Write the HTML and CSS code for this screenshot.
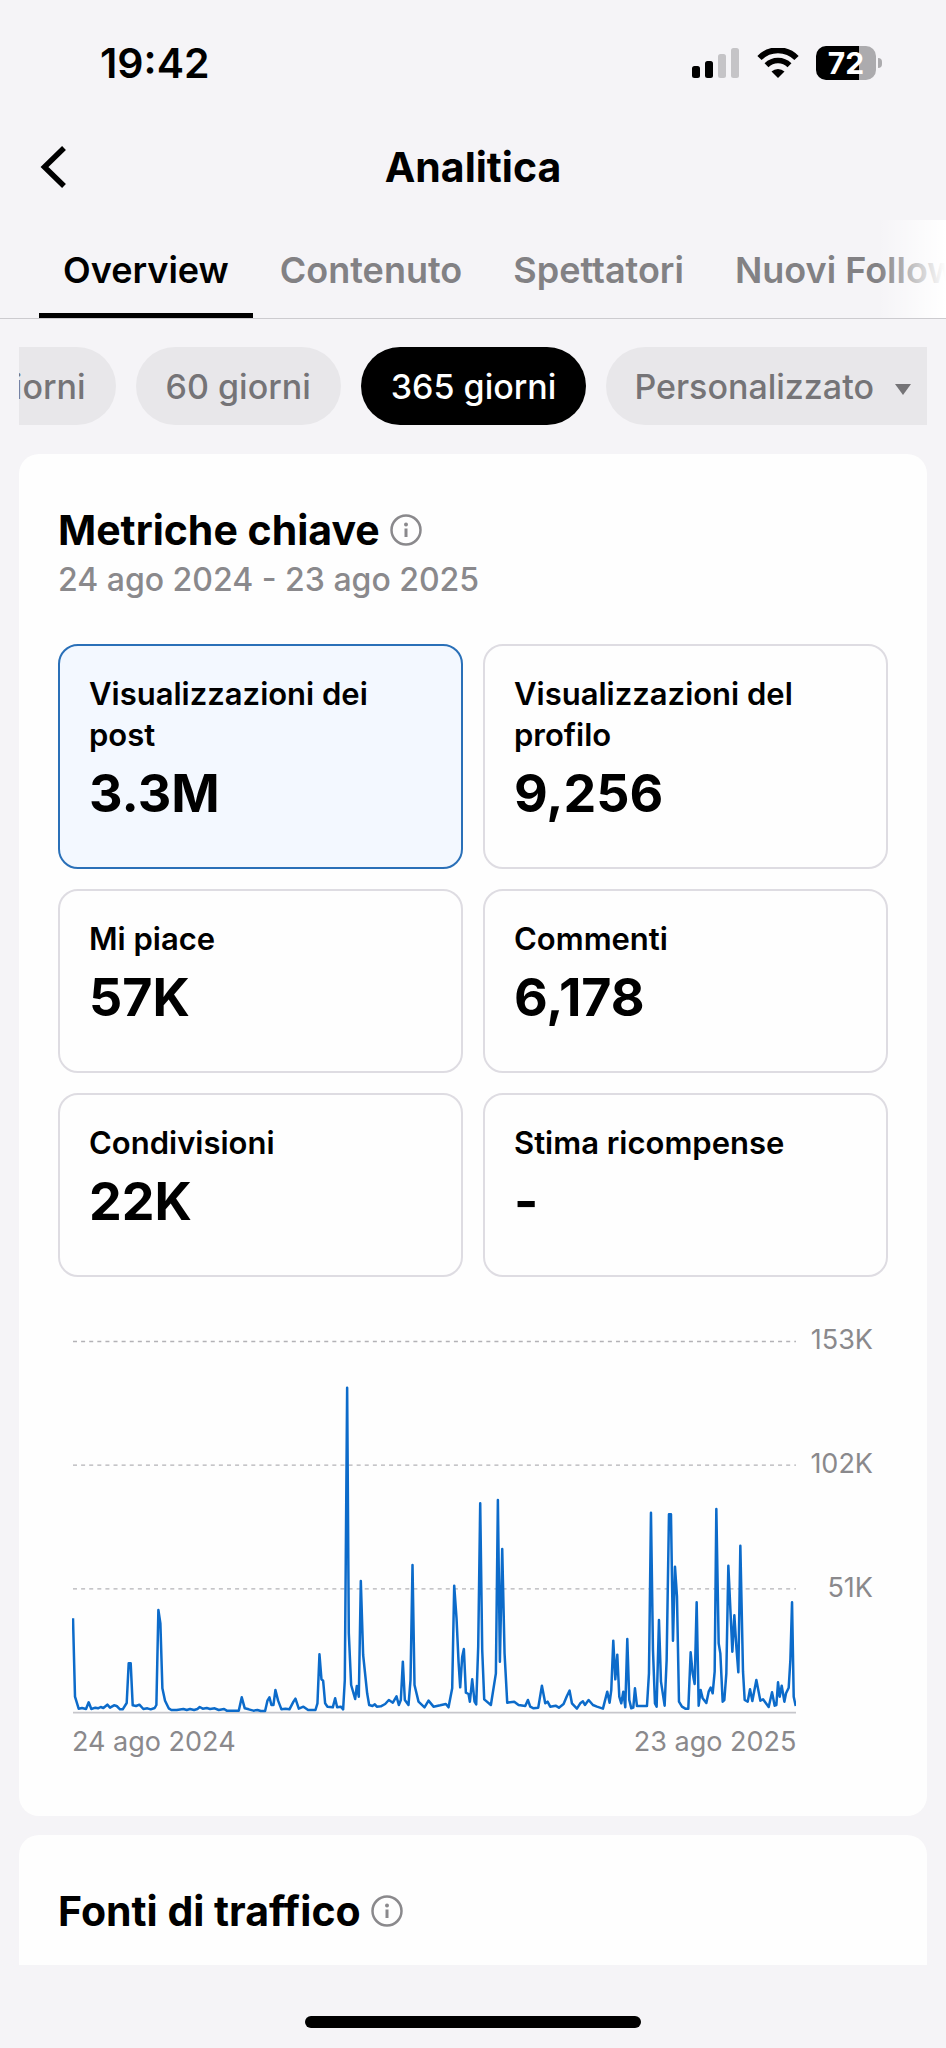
FILE: index.html
```html
<!DOCTYPE html>
<html lang="it">
<head>
  <meta charset="UTF-8">
  <meta name="viewport" content="width=device-width, initial-scale=1">
  <title>Analitica</title>
  <link rel="stylesheet" href="styles.css">
</head>
<body>

<div class="status-bar">
  <span class="time">19:42</span>
  <div class="status-icons">
    <svg width="48" height="30" viewBox="0 0 48 30">
      <rect x="0" y="18" width="8" height="12" rx="2.5"/>
      <rect x="13" y="13" width="8" height="17" rx="2.5"/>
      <rect x="26" y="6" width="8" height="24" rx="2.5" fill="#c5c4c7"/>
      <rect x="39" y="0" width="8" height="30" rx="2.5" fill="#c5c4c7"/>
    </svg>
    <svg width="42" height="30" viewBox="0 0 42 30">
      <path d="M2.5 10 A26 26 0 0 1 39.5 10" fill="none" stroke="#000" stroke-width="6"/>
      <path d="M9.5 17.3 A16.3 16.3 0 0 1 32.5 17.3" fill="none" stroke="#000" stroke-width="5.5"/>
      <path d="M21 30 L14.5 23.6 A9.2 9.2 0 0 1 27.5 23.6 Z"/>
    </svg>
    <div class="battery"><span>72</span></div>
  </div>
</div>

<header class="header">
  <button class="back" aria-label="Indietro">
    <svg width="26" height="44" viewBox="0 0 26 44">
      <path d="M24 3 L4.5 22 L24 41" fill="none" stroke="#000" stroke-width="5.5"/>
    </svg>
  </button>
  <h1>Analitica</h1>
</header>

<nav class="tabs">
  <a href="#" class="tab active">Overview</a>
  <a href="#" class="tab">Contenuto</a>
  <a href="#" class="tab">Spettatori</a>
  <a href="#" class="tab">Nuovi Follower</a>
</nav>

<div class="filters">
  <button class="pill">28 giorni</button>
  <button class="pill">60 giorni</button>
  <button class="pill selected">365 giorni</button>
  <button class="pill">Personalizzato
    <svg width="16" height="11" viewBox="0 0 16 11"><path d="M0 0 H16 L8 11 Z" fill="#757477"/></svg>
  </button>
</div>

<main class="content">
  <section class="card">
    <h2>Metriche chiave
      <svg class="info" width="32" height="32" viewBox="0 0 32 32">
        <circle cx="16" cy="16" r="14.5" fill="none" stroke="#8a898c" stroke-width="2.5"/>
        <circle cx="16" cy="10.5" r="2" fill="#8a898c"/>
        <path d="M16 14.5 V23" stroke="#8a898c" stroke-width="3"/>
      </svg>
    </h2>
    <p class="range">24 ago 2024 - 23 ago 2025</p>

    <div class="metrics">
      <button class="metric active"><span>Visualizzazioni dei post</span><b>3.3M</b></button>
      <button class="metric"><span>Visualizzazioni del profilo</span><b>9,256</b></button>
      <button class="metric"><span>Mi piace</span><b>57K</b></button>
      <button class="metric"><span>Commenti</span><b>6,178</b></button>
      <button class="metric"><span>Condivisioni</span><b>22K</b></button>
      <button class="metric"><span>Stima ricompense</span><b>-</b></button>
    </div>

    <div class="chart">
      <div class="plot">
        <svg viewBox="36 60 2172 1122" preserveAspectRatio="none">
          <!-- grid -->
          <g stroke="#b3b2b6" stroke-width="4" stroke-dasharray="12 12.3">
            <path d="M39 64.5 H2208"/>
            <path d="M39 435.5 H2208"/>
            <path d="M39 806.5 H2208"/>
          </g>
          <path d="M39 1178 H2208" stroke="#c6c6cb" stroke-width="5"/>
          <!-- daily views -->
          <polyline fill="none" stroke="#0c6bca" stroke-width="7.5" stroke-linejoin="round" points="
            39,895 45,1130 56,1166 66,1164 78,1167 86,1147 94,1167 106,1163 114,1165 122,1161 130,1164 142,1154 150,1163 162,1156 170,1158 180,1168 188,1168
            200,1149 206,1030 212,1030 218,1156 228,1158 238,1154 250,1167 262,1165 272,1168 284,1164 289,1155 295,870 301,910 307,1105 315,1142 326,1165
            334,1170 350,1170 370,1167 380,1170 390,1167 402,1170 412,1167 419,1161 428,1166 440,1164 450,1167 464,1165 476,1170 492,1167 500,1172 536,1172
            545,1132 554,1165 566,1168 580,1172 592,1170 602,1173 615,1173 622,1142 628,1132 634,1155 640,1155 646,1110 654,1142 664,1168 676,1166 688,1168
            700,1145 706,1136 716,1166 730,1160 744,1170 766,1170 772,1150 778,1003 784,1078 789,1082 795,1150 802,1160 818,1162 825,1135 831,1162 842,1160
            849,1168 854,1080 861,203 866,940 873,1095 885,1137 890,1098 896,1130 902,783 909,1005 921,1120 927,1155 937,1158 944,1153 950,1160 962,1159
            975,1152 986,1140 998,1148 1009,1129 1016,1155 1022,1140 1028,1025 1034,1140 1045,1155 1051,1080 1057,735 1063,1095 1075,1145 1093,1162
            1105,1142 1120,1160 1140,1156 1157,1152 1165,1162 1176,1105 1182,797 1189,895 1195,1025 1200,1102 1206,1010 1211,987 1217,1118 1225,1122
            1229,1145 1236,1078 1243,1145 1248,1153 1254,980 1260,550 1266,990 1272,1138 1292,1155 1307,1060 1313,540 1319,1025 1326,687 1333,1000
            1341,1148 1362,1145 1375,1155 1395,1158 1403,1140 1410,1160 1420,1165 1434,1163 1445,1097 1455,1150 1462,1145 1470,1160 1486,1157 1496,1163
            1510,1152 1520,1128 1528,1112 1535,1150 1550,1166 1560,1150 1568,1144 1574,1155 1585,1140 1598,1155 1610,1160 1628,1166 1641,1115 1648,1148
            1653,1110 1659,962 1665,1078 1671,1004 1677,1130 1683,1150 1689,1115 1695,1162 1701,957 1707,1140 1713,1165 1719,1163 1724,1105 1730,1158
            1760,1158 1766,1060 1772,578 1778,990 1784,1150 1789,1160 1796,900 1802,1085 1813,1157 1819,1020 1826,583 1832,583 1838,962 1844,740 1850,830
            1856,1145 1865,1160 1875,1166 1884,1166 1891,997 1897,1060 1903,1092 1909,847 1915,1157 1921,1110 1927,1135 1938,1149 1945,1115 1951,1103
            1957,1120 1963,1055 1968,567 1975,970 1980,1000 1987,1145 1992,1140 1998,1060 2004,737 2016,995 2022,886 2028,980 2034,1057 2040,677 2048,1055
            2053,1140 2062,1145 2069,1108 2076,1143 2088,1080 2100,1142 2108,1138 2125,1161 2135,1117 2143,1157 2148,1155 2153,1087 2158,1130 2164,1097
            2172,1145 2177,1120 2185,1103 2190,1020 2195,847 2200,1130 2206,1158"/>
        </svg>
        <div class="x-axis"><span>24 ago 2024</span><span>23 ago 2025</span></div>
      </div>
      <div class="y-axis"><span>153K</span><span>102K</span><span>51K</span></div>
    </div>
  </section>

  <section class="card">
    <h2>Fonti di traffico
      <svg class="info" width="32" height="32" viewBox="0 0 32 32">
        <circle cx="16" cy="16" r="14.5" fill="none" stroke="#8a898c" stroke-width="2.5"/>
        <circle cx="16" cy="10.5" r="2" fill="#8a898c"/>
        <path d="M16 14.5 V23" stroke="#8a898c" stroke-width="3"/>
      </svg>
    </h2>
  </section>
</main>

<footer class="home-bar"><div></div></footer>

</body>
</html>
```
FILE: styles.css
```css
* {
  box-sizing: border-box;
}

body {
  margin: 0;
  height: 100vh;
  display: flex;
  flex-direction: column;
  overflow: hidden;
  background: #f5f4f7;
  color: #000;
  font-family: Inter, "Liberation Sans", sans-serif;
}

h1, h2, p {
  margin: 0;
}

button {
  border: 0;
  padding: 0;
  background: none;
  color: inherit;
  font-family: inherit;
  cursor: pointer;
}

/* status bar */
.status-bar {
  flex: none;
  display: flex;
  align-items: center;
  justify-content: space-between;
  height: 116px;
  padding: 10px 64px 0 100px;
}

.time {
  font-size: 41px;
  font-weight: 600;
}

.status-icons {
  display: flex;
  align-items: center;
  gap: 17px;
}

.battery {
  position: relative;
  width: 60px;
  height: 34px;
  margin-right: 6px;
  border-radius: 10px;
  background: linear-gradient(to right, #000 72%, #acabae 72%);
  color: #fff;
  font-size: 30px;
  font-weight: 700;
  line-height: 34px;
  text-align: center;
}

.battery:after {
  content: "";
  position: absolute;
  right: -6px;
  top: 12px;
  width: 4px;
  height: 10px;
  border-radius: 0 4px 4px 0;
  background: #acabae;
}

/* title */
.header {
  flex: none;
  display: grid;
  grid-template-columns: 1fr auto 1fr;
  align-items: center;
  height: 104px;
  padding: 0 40px 2px;
}

.header h1 {
  font-size: 41px;
  font-weight: 700;
}

.back {
  justify-self: start;
  height: 44px;
}

.back svg {
  display: block;
}

/* tabs */
.tabs {
  flex: none;
  position: relative;
  display: flex;
  gap: 3px;
  height: 99px;
  padding-left: 39px;
  overflow: hidden;
  border-bottom: 1px solid #cccbcf;
}

.tabs:after {
  content: "";
  position: absolute;
  right: 0;
  top: 0;
  width: 68px;
  height: 100%;
  background: linear-gradient(to right, rgba(255, 255, 255, 0), #fff);
}

.tab {
  flex: none;
  padding: 0 24px;
  border-bottom: 5px solid transparent;
  color: #828184;
  font-size: 36px;
  font-weight: 600;
  line-height: 100px;
  text-decoration: none;
}

.tab.active {
  color: #000;
  border-color: #000;
}

/* date filters */
.filters {
  flex: none;
  display: flex;
  justify-content: flex-end;
  gap: 20px;
  margin: 28px 19px 29px;
  overflow: hidden;
}

.pill {
  flex: none;
  height: 78px;
  padding: 0 30px;
  border-radius: 39px;
  background: #e8e7ea;
  color: #757477;
  font-size: 34px;
  font-weight: 500;
}

.pill:last-child {
  padding: 0 16px 0 28px;
  border-radius: 39px 0 0 39px;
}

.pill svg {
  margin-left: 12px;
  vertical-align: 4px;
}

.pill.selected {
  background: #000;
  color: #fff;
}

/* cards */
.content {
  flex: 1;
  min-height: 0;
  padding: 0 19px;
  overflow: hidden;
}

.card {
  margin-bottom: 19px;
  padding: 50px 39px 56px;
  border-radius: 20px;
  background: #fefefe;
}

.card h2 {
  display: flex;
  align-items: center;
  gap: 10px;
  font-size: 41px;
  font-weight: 700;
  line-height: 52px;
}

.range {
  color: #8a898c;
  font-size: 32px;
  font-weight: 500;
  line-height: 48px;
}

.metrics {
  display: grid;
  grid-template-columns: 1fr 1fr;
  gap: 20px;
  margin-top: 40px;
}

.metric {
  display: flex;
  flex-direction: column;
  gap: 7px;
  padding: 27px 29px 41px;
  border: 2px solid #dedce2;
  border-radius: 20px;
  text-align: left;
}

.metric.active {
  border-color: #2a70b8;
  background: #f3f8ff;
}

.metric span {
  font-size: 31px;
  font-weight: 600;
  line-height: 41px;
}

.metric b {
  font-size: 52px;
  font-weight: 700;
  line-height: 64px;
}

/* chart */
.chart {
  display: flex;
  gap: 14px;
  margin-top: 63px;
  padding: 0 15px 0 14px;
  color: #8a898c;
  font-size: 27px;
}

.plot {
  flex: 1;
}

.plot svg {
  display: block;
  width: 100%;
  height: 374px;
}

.x-axis {
  display: flex;
  justify-content: space-between;
  margin-top: 10px;
  line-height: 36px;
}

.y-axis {
  display: flex;
  flex-direction: column;
  gap: 88px;
  margin-top: -18px;
  text-align: right;
  line-height: 36px;
}

/* home indicator */
.home-bar {
  flex: none;
  display: flex;
  justify-content: center;
  height: 83px;
  padding-top: 51px;
}

.home-bar div {
  width: 336px;
  height: 12px;
  border-radius: 6px;
  background: #000;
}
```
